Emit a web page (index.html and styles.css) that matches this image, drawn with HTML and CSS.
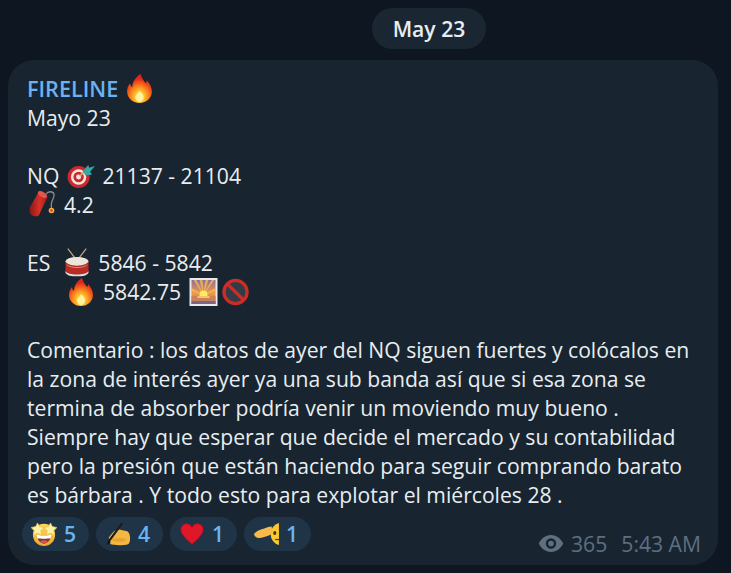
FILE: index.html
```
<!DOCTYPE html>
<html lang="es">
<head>
<meta charset="utf-8">
<title>FIRELINE</title>
<link rel="stylesheet" href="styles.css">
</head>
<body>
<svg class="defs" width="0" height="0" aria-hidden="true">
  <defs>
    <radialGradient id="gFire" cx="50%" cy="78%" r="62%">
      <stop offset="0" stop-color="#fff6a8"/><stop offset=".3" stop-color="#ffc22e"/><stop offset=".62" stop-color="#f97b1c"/><stop offset="1" stop-color="#e0261a"/>
    </radialGradient>
    <linearGradient id="gDyn" x1="0" y1="0" x2="1" y2="0">
      <stop offset="0" stop-color="#8e1712"/><stop offset=".55" stop-color="#d4322a"/><stop offset="1" stop-color="#a51d18"/>
    </linearGradient>
    <linearGradient id="gSky" x1="0" y1="0" x2="0" y2="1">
      <stop offset="0" stop-color="#8d6d9e"/><stop offset=".55" stop-color="#f39a4a"/><stop offset=".68" stop-color="#e8873f"/><stop offset="1" stop-color="#8a6a8e"/>
    </linearGradient>
    <linearGradient id="gFace" x1="0" y1="0" x2="0" y2="1">
      <stop offset="0" stop-color="#ffd85c"/><stop offset="1" stop-color="#eda52c"/>
    </linearGradient>
    <symbol id="fire" viewBox="0 0 24 28">
      <path fill="url(#gFire)" d="M13 0c1 4 3 6 5 9 1-1 1-2 1-3 3 3 5 7 5 11 0 6-5 11-12 11S0 23 0 17c0-3 1-6 3-8 0 2 1 3 2 4 0-5 3-10 8-13z"/>
      <path fill="#fff3a0" d="M12 16c1 2 4 3 4 7 0 2-2 4-4 4s-4-2-4-4c0-3 3-4 4-7z"/>
    </symbol>
    <symbol id="target" viewBox="0 0 30 25">
      <circle cx="12" cy="13.500" r="11.500" fill="#c92a2e"/>
      <circle cx="12" cy="13.500" r="8" fill="#f4e4e0"/>
      <circle cx="12" cy="13.500" r="5.400" fill="#c92a2e"/>
      <circle cx="12" cy="13.500" r="2.600" fill="#f4e4e0"/>
      <path stroke="#d9b15a" stroke-width="1.600" d="M13 12.500l6-5"/>
      <path fill="#3aa6a4" d="M16 8l6-7 1 3 6-2-5 6 2 3-7 1-1-2z"/>
    </symbol>
    <symbol id="dynamite" viewBox="0 0 28 27">
      <path fill="url(#gDyn)" d="M.5 17L9 2c3-2 8 0 9.500 4L10 24c-3 3-9 1-9.500-4z"/>
      <ellipse cx="13.500" cy="3.500" rx="5" ry="2.600" transform="rotate(30 13.500 3.500)" fill="#e4564c"/>
      <path fill="none" stroke="#8d8d8d" stroke-width="1.300" d="M17 3c2-3 7-3 8 0s-2 6-2.500 9 0 5 0 6"/>
      <circle cx="22.500" cy="19.500" r="2.800" fill="#f6b23a"/><circle cx="22.500" cy="19.500" r="1.300" fill="#e5352a"/>
    </symbol>
    <symbol id="drum" viewBox="0 0 26 30">
      <path stroke="#c9a878" stroke-width="1.300" d="M3 0l10 13M23 0l-10 13"/>
      <ellipse cx="13" cy="14" rx="12.500" ry="5" fill="#ece5dc"/>
      <path fill="#b62d24" d="M.5 14c2 3 6 4.500 12.500 4.500S23.500 17 25.500 14v11c-2 3-6 4.500-12.500 4.500S2.500 28 .5 25z"/>
      <path fill="#e0dfdd" d="M.5 24.500c2 2.500 6 3.500 12.500 3.500s10.500-1 12.500-3.500V26c-2 3-6 4-12.500 4S2.500 29 .5 26z"/>
      <path fill="none" stroke="#e9857c" stroke-width="1" d="M2 17.500c4 4 18 4 22 0"/>
    </symbol>
    <symbol id="sunrise" viewBox="0 0 28 28">
      <rect width="28" height="28" fill="#e9e9ea"/>
      <rect x="2" y="2" width="24" height="24" fill="url(#gSky)"/>
      <path fill="#f6c052" opacity=".75" d="M14 17L4 2h3zM14 17L10 2h3zM14 17L16 2h3zM14 17L22 2h3zM14 17L2 10v3zM14 17l12-7v3z"/>
      <circle cx="14" cy="16.500" r="4" fill="#ffe96a"/>
      <rect x="2" y="18" width="24" height="8" fill="#c9825a"/>
      <rect x="8" y="18" width="12" height="2" fill="#f5c563"/>
      <rect x="2" y="23" width="24" height="3" fill="#7d6488"/>
    </symbol>
    <symbol id="noentry" viewBox="0 0 28 28">
      <circle cx="14" cy="14" r="12" fill="#e7e4e4" fill-opacity=".12" stroke="#cf2c27" stroke-width="3.400"/>
      <path stroke="#cf2c27" stroke-width="3.400" d="M6 6l16 16"/>
    </symbol>
    <symbol id="starstruck" viewBox="0 0 28 26">
      <circle cx="14" cy="14" r="12" fill="url(#gFace)"/>
      <path fill="#fff" d="M14 15c-3 0-6-.5-8-1.500 .5 5 3.500 10.500 8 10.500s7.500-5.500 8-10.500c-2 1-5 1.500-8 1.500z"/>
      <path fill="#7a3f1d" d="M7 17.500c3 .7 11 .7 14 0-1 3-3.500 6-7 6s-6-3-7-6z"/>
      <path fill="#d9534a" d="M10 21c2-1.500 6-1.500 8 0-1 1.500-2.500 2.500-4 2.500s-3-1-4-2.500z"/>
      <path fill="#fdf3a5" stroke="#e9c04a" stroke-width=".8" d="M7 1l2 4 5 1-3.500 3.500 1 5L7 12l-4.500 2.500 1-5L0 6l5-1zM21 1l2 4 5 1-3.500 3.500 1 5L21 12l-4.500 2.500 1-5L14 6l5-1z"/>
    </symbol>
    <symbol id="writing" viewBox="0 0 28 26">
      <path fill="#f4b840" d="M4 17C8 11 11 8 15 8l9 2c2 1 3.500 5 3 10-.5 2-1 3.500-2 4-6 1.500-15 1.500-20-.5z"/>
      <path fill="#e6a233" d="M8 18c5-1 11-1 14 0 0 2-.5 3-1.500 3-4 .5-9 .5-12.500-.5z"/>
      <path stroke="#1a1c20" stroke-width="2.400" stroke-linecap="round" d="M18 2L4 21"/>
      <path fill="#14161a" d="M5 19l-4 6 5-2z"/>
    </symbol>
    <symbol id="heart" viewBox="0 0 28 28">
      <path fill="#e01629" stroke="#b00c1c" stroke-width="1" d="M14 26C6 19 1 14 1 8.500 1 5 4 2 7.500 2 10.500 2 13 4 14 6c1-2 3.500-4 6.500-4C24 2 27 5 27 8.500 27 14 22 19 14 26z"/>
    </symbol>
    <symbol id="pointing" viewBox="0 0 28 26">
      <path fill="#f9c92f" d="M28 1A12.500 12.500 0 0 0 28 25z"/>
      <ellipse cx="23.500" cy="12" rx="1.700" ry="2.200" fill="#4a3210"/>
      <path stroke="#4a3210" stroke-width="1.300" d="M24 19h4"/>
      <path fill="#f7b94c" d="M1 13c2-3 7-5 11-6 3-1 6-2 8-2 1 2 1 6 0 8-3 2-7 3-11 4-4 1-7 0-8-4z"/>
    </symbol>
    <symbol id="eye" viewBox="0 0 26 18">
      <path fill-rule="evenodd" d="M13 0c6 0 10.500 4 13 9-2.500 5-7 9-13 9S2.500 14 0 9c2.500-5 7-9 13-9zm0 3.500a5.500 5.500 0 1 0 0 11 5.500 5.500 0 0 0 0-11zm0 2.500a3 3 0 1 1 0 6 3 3 0 0 1 0-6z"/>
    </symbol>
  </defs>
</svg>

<div class="date-row"><span class="date-pill">May 23</span></div>

<article class="bubble">
  <div class="line name"><span class="sender">FIRELINE</span><svg class="emoji fire-name"><use href="#fire"/></svg></div>
  <div class="line">Mayo 23</div>
  <div class="line blank"></div>
  <div class="line">NQ<svg class="emoji target"><use href="#target"/></svg>21137 - 21104</div>
  <div class="line dyn-line"><svg class="emoji dynamite"><use href="#dynamite"/></svg>4.2</div>
  <div class="line blank"></div>
  <div class="line">ES<svg class="emoji drum"><use href="#drum"/></svg>5846 - 5842</div>
  <div class="line indented"><svg class="emoji fire-inline"><use href="#fire"/></svg>5842.75<svg class="emoji sunrise"><use href="#sunrise"/></svg><svg class="emoji noentry"><use href="#noentry"/></svg></div>
  <div class="line blank"></div>
  <p class="comment">Comentario : los datos de ayer del NQ siguen fuertes y colócalos en<br>la zona de interés ayer ya una sub banda así que si esa zona se<br>termina de absorber podría venir un moviendo muy bueno .<br>Siempre hay que esperar que decide el mercado y su contabilidad<br>pero la presión que están haciendo para seguir comprando barato<br>es bárbara . Y todo esto para explotar el miércoles 28 .</p>

  <footer class="footer">
    <div class="reactions">
      <span class="reaction"><svg class="react-icon"><use href="#starstruck"/></svg>5</span>
      <span class="reaction"><svg class="react-icon"><use href="#writing"/></svg>4</span>
      <span class="reaction"><svg class="react-icon"><use href="#heart"/></svg>1</span>
      <span class="reaction"><svg class="react-icon"><use href="#pointing"/></svg>1</span>
    </div>
    <div class="meta">
      <svg class="eye"><use href="#eye"/></svg><span class="views">365</span><span>5:43 AM</span>
    </div>
  </footer>
</article>
</body>
</html>
```
FILE: styles.css
```
* { box-sizing: border-box; }

html, body { height: 100%; }

body {
  margin: 0;
  overflow: hidden;
  background: #0e1621;
  color: #e9edf0;
  font-family: "Open Sans", "Noto Sans", sans-serif;
  font-size: 21.150px;
}

.defs { display: block; height: 0; }

.date-row {
  display: flex;
  justify-content: center;
  padding: 8px 0 11px 127px;
}

.date-pill {
  display: block;
  width: 114px;
  height: 41px;
  border-radius: 20.500px;
  background: #1a2733;
  font-weight: 600;
  line-height: 41px;
  text-align: center;
}

.bubble {
  width: 710px;
  height: 505px;
  margin-left: 8px;
  padding: 14px 19px 0;
  border-radius: 26px;
  background: #182530;
}

.line {
  display: flex;
  align-items: center;
  height: 29px;
  line-height: 29px;
  white-space: nowrap;
}

.sender { color: #6ab3f3; font-weight: 600; font-size: 21.600px; }

.comment {
  margin: 0;
  line-height: 29.100px;
  white-space: nowrap;
}

.emoji { flex: none; display: block; }

.fire-name { width: 25px; height: 29px; margin: -1px 0 0 9px; }
.target { width: 29px; height: 24px; margin: 0 6px 0 8px; }
.dyn-line { padding-left: 2px; }
.dynamite { width: 28px; height: 27px; margin-right: 7px; }
.drum { width: 24px; height: 29px; margin: -1px 9px 0 15px; }
.indented { padding-left: 42px; }
.fire-inline { width: 24px; height: 28px; margin-right: 10px; }
.sunrise { width: 29px; height: 28px; margin-left: 8px; }
.noentry { width: 27px; height: 28px; margin-left: 4px; }

.footer {
  display: flex;
  justify-content: space-between;
  align-items: flex-start;
  margin: 7px 0 0 -5px;
}

.reactions { display: flex; gap: 7px; }

.reaction {
  display: flex;
  align-items: center;
  width: 67px;
  height: 34px;
  padding-left: 9px;
  border-radius: 17px;
  background: #1f3447;
  color: #6ab3f3;
  font-weight: 600;
}

.react-icon { flex: none; width: 26px; height: 24px; margin-right: 7px; }

.meta {
  display: flex;
  align-items: center;
  margin: 10px -2px 0 0;
  height: 34px;
  color: #5e6f80;
}

.eye { width: 26px; height: 17px; margin-right: 7px; fill: #5e6f80; }
.views { margin-right: 14px; }
```
